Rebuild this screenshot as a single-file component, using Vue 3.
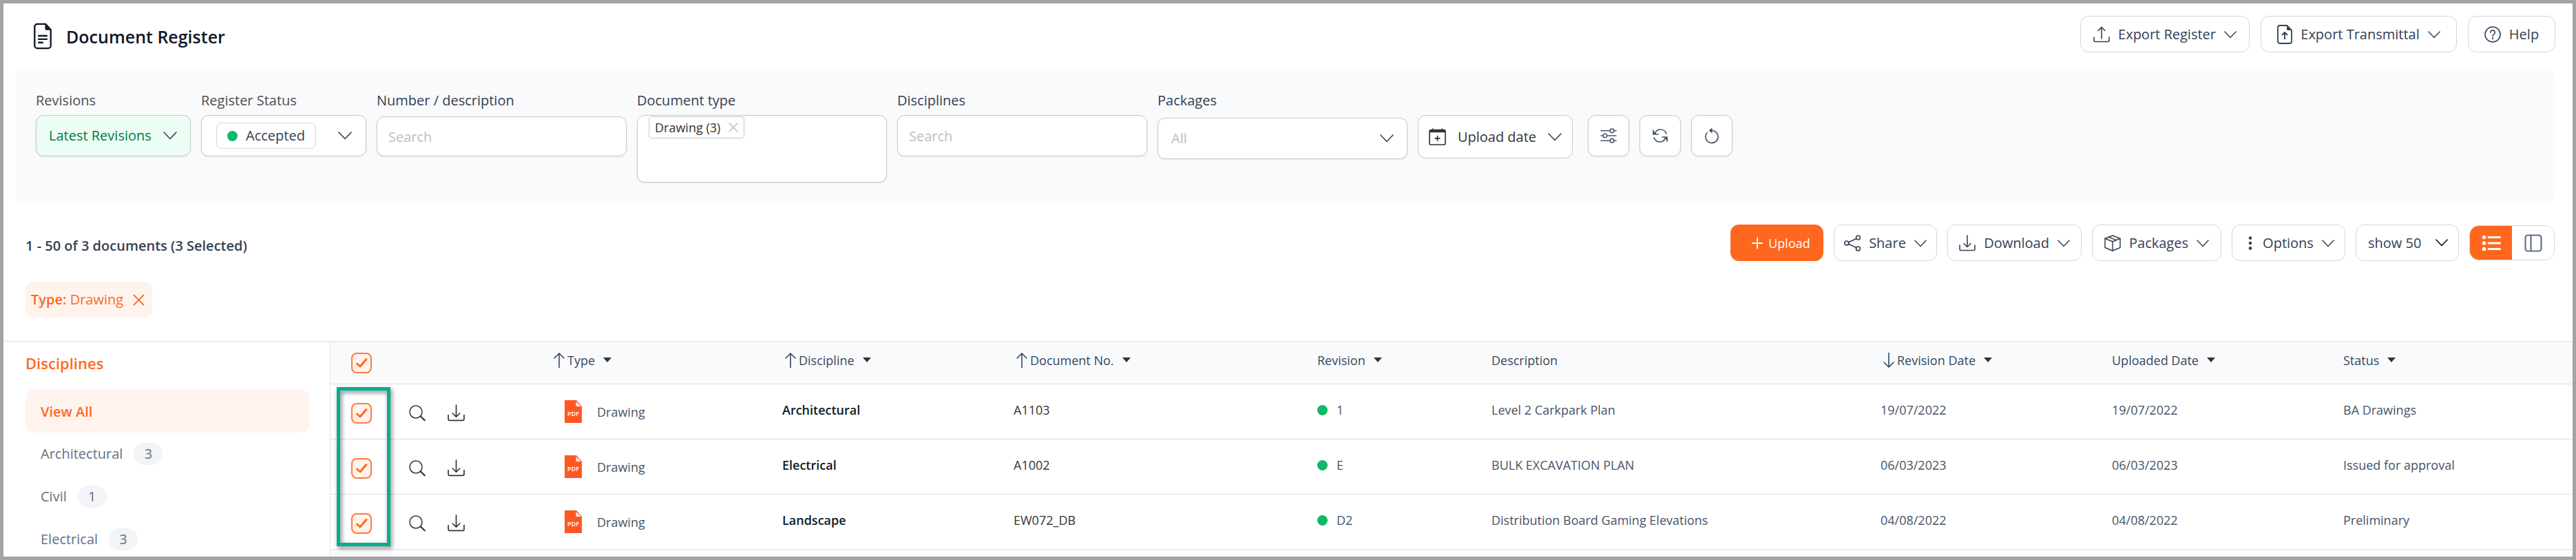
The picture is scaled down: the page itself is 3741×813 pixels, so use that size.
<script setup>
import { h, ref } from 'vue'

const paths = {
  file: { box: '0 0 28 40', w: 2.4, d: ['M6 2h12.500l7.500 8.500V34a4 4 0 0 1-4 4H6A4 4 0 0 1 2 34V6A4 4 0 0 1 6 2z', 'M8 19.500h12M8 24.500h12M8 29.500h6'], f: ['M17.500 2l8.500 9h-6.500a2 2 0 0 1-2-2z'] },
  upload: { box: '0 0 24 24', w: 1.6, d: ['M1 16v4.500a2 2 0 0 0 2 2h18a2 2 0 0 0 2-2V16', 'M12 18V1.500M7 6.500l5-5 5 5'] },
  download: { box: '0 0 24 24', w: 1.6, d: ['M1 15v5.500a2 2 0 0 0 2 2h18a2 2 0 0 0 2-2V15', 'M12 1v16.500M7 12.500l5 5 5-5'] },
  fileUp: { box: '0 0 22 28', w: 1.8, d: ['M4 1h10.500L21 8v16a3 3 0 0 1-3 3H4a3 3 0 0 1-3-3V4a3 3 0 0 1 3-3z', 'M11 20.500v-9M7.500 14.500l3.500-3.500 3.500 3.500'], f: ['M14 1l7 7h-5.500A1.500 1.500 0 0 1 14 6.500z'] },
  help: { box: '0 0 24 24', w: 1.6, d: ['M12 1a11 11 0 1 1 0 22 11 11 0 0 1 0-22z', 'M8.800 9.200a3.200 3.200 0 1 1 5 2.600c-1.200.9-1.800 1.400-1.800 2.900'], f: ['M12 16.500a1.300 1.300 0 1 1 0 2.600 1.300 1.300 0 0 1 0-2.600z'] },
  share: { box: '0 0 24 24', w: 1.7, d: ['M20.500 1a3 3 0 1 1 0 6 3 3 0 0 1 0-6z', 'M20.500 17a3 3 0 1 1 0 6 3 3 0 0 1 0-6z', 'M3.800 9a3 3 0 1 1 0 6 3 3 0 0 1 0-6z', 'M6.500 10.800l11.300-5.400M6.500 13.200l11.300 5.400'] },
  box: { box: '0 0 24 24', w: 1.5, d: ['M12 1l11 4.300v13.200L12 23 1 18.500V5.300z', 'M1 5.300l11 4.500 11-4.500M12 9.800V23M6.500 3.200l11 4.400'] },
  dots: { box: '0 0 6 24', w: 0, f: ['M3 2.300a2.300 2.300 0 1 1 0 4.600 2.300 2.300 0 0 1 0-4.600z', 'M3 9.700a2.300 2.300 0 1 1 0 4.600 2.300 2.300 0 0 1 0-4.600z', 'M3 17.100a2.300 2.300 0 1 1 0 4.600 2.300 2.300 0 0 1 0-4.600z'] },
  plus: { box: '0 0 16 18', w: 1.8, d: ['M8 1.500v15M.5 9h15'] },
  chevron: { box: '0 0 20 12', w: 1.6, d: ['M1 1l9 9.500L19 1'] },
  list: { box: '0 0 28 24', w: 3, d: ['M10 3.500h16.500M10 12h16.500M10 20.500h16.500'], f: ['M3.500.8a2.700 2.700 0 1 1 0 5.400 2.700 2.700 0 0 1 0-5.400z', 'M3.500 9.300a2.700 2.700 0 1 1 0 5.400 2.700 2.700 0 0 1 0-5.400z', 'M3.500 17.800a2.700 2.700 0 1 1 0 5.400 2.700 2.700 0 0 1 0-5.400z'] },
  sidebar: { box: '0 0 26 26', w: 2.2, d: ['M5 1.500h16A3.500 3.500 0 0 1 24.500 5v16a3.500 3.500 0 0 1-3.500 3.500H5A3.500 3.500 0 0 1 1.500 21V5A3.500 3.500 0 0 1 5 1.500z', 'M9.500 1.500v23'] },
  calendar: { box: '0 0 24 24', w: 1.6, d: ['M3 2.500h18a2 2 0 0 1 2 2V21a2 2 0 0 1-2 2H3a2 2 0 0 1-2-2V4.500a2 2 0 0 1 2-2z', 'M12 11v6.400M8.800 14.200h6.400M5.500 1v2M18.500 1v2'], f: ['M1 6V4.500a2 2 0 0 1 2-2h18a2 2 0 0 1 2 2V6z'] },
  sliders: { box: '0 0 24 24', w: 1.6, d: ['M17 2a2.800 2.800 0 1 1 0 5.600A2.800 2.800 0 0 1 17 2z', 'M7 9.200a2.800 2.800 0 1 1 0 5.600 2.800 2.800 0 0 1 0-5.600z', 'M17 16.400a2.800 2.800 0 1 1 0 5.600 2.800 2.800 0 0 1 0-5.600z', 'M1 4.800h13M20 4.800h3M1 12h3M10 12h13M1 19.200h13M20 19.200h3'] },
  refresh: { box: '0 0 24 24', w: 1.7, d: ['M4.500 8C6.300 4.800 9 3 12.300 3c4 0 7.300 2.500 8.700 6', 'M19.500 16c-1.800 3.200-4.500 5-7.800 5-4 0-7.300-2.500-8.700-6', 'M2 4v6h7', 'M22 20v-6h-7'], f: ['M2 5v5h5z', 'M22 19v-5h-5z'] },
  reset: { box: '0 0 24 24', w: 1.7, d: ['M12 4.500A9 9 0 1 1 5 7.800'], f: ['M12.500.5v8L7.500 4.500z'] },
  search: { box: '0 0 24 24', w: 1.5, d: ['M10 1a9 9 0 1 1 0 18 9 9 0 0 1 0-18z', 'M16.500 16.500l6 6', 'M17.200 16.200l6 6'] },
  close: { box: '0 0 18 18', w: 2, d: ['M1.500 1.500l15 15M16.500 1.500l-15 15'] },
  up: { box: '0 0 16 22', w: 1.6, d: ['M8 21.500V1.200M1 8l7-7 7 7'] },
  down: { box: '0 0 16 22', w: 1.6, d: ['M8 .5v20.300M1 14l7 7 7-7'] },
  tick: { box: '0 0 30 30', w: 3, d: ['M8.500 16l4.500 4 9-10.500'] },
}

const Icon = (props) => {
  const p = paths[props.name]
  return h('svg', { viewBox: p.box, fill: 'none', 'aria-hidden': 'true', class: 'icon' }, [
    ...(p.d || []).map((d) => h('path', { d, stroke: 'currentColor', 'stroke-width': p.w, 'stroke-linecap': 'round', 'stroke-linejoin': 'round' })),
    ...(p.f || []).map((d) => h('path', { d, fill: 'currentColor' })),
  ])
}
Icon.props = ['name']

const disciplines = [
  { name: 'Architectural', count: 3 },
  { name: 'Civil', count: 1 },
  { name: 'Electrical', count: 3 },
]

const columns = [
  { label: 'Type', sort: 'up', menu: true },
  { label: 'Discipline', sort: 'up', menu: true },
  { label: 'Document No.', sort: 'up', menu: true },
  { label: 'Revision', menu: true },
  { label: 'Description' },
  { label: 'Revision Date', sort: 'down', menu: true },
  { label: 'Uploaded Date', menu: true },
  { label: 'Status', menu: true },
]

const rows = ref([
  { selected: true, type: 'Drawing', discipline: 'Architectural', number: 'A1103', revision: '1', description: 'Level 2 Carkpark Plan', revised: '19/07/2022', uploaded: '19/07/2022', status: 'BA Drawings' },
  { selected: true, type: 'Drawing', discipline: 'Electrical', number: 'A1002', revision: 'E', description: 'BULK EXCAVATION PLAN', revised: '06/03/2023', uploaded: '06/03/2023', status: 'Issued for approval' },
  { selected: true, type: 'Drawing', discipline: 'Landscape', number: 'EW072_DB', revision: 'D2', description: 'Distribution Board Gaming Elevations', revised: '04/08/2022', uploaded: '04/08/2022', status: 'Preliminary' },
])
const allSelected = ref(true)
</script>

<template>
  <div class="page">
    <header class="header">
      <div class="title">
        <Icon name="file" class="title-icon" />
        <h1>Document Register</h1>
      </div>
      <div class="header-actions">
        <button type="button" class="btn w-register"><Icon name="upload" class="i24" /><span>Export Register</span><Icon name="chevron" class="chev" /></button>
        <button type="button" class="btn w-transmittal"><Icon name="fileUp" class="i-file" /><span>Export Transmittal</span><Icon name="chevron" class="chev" /></button>
        <button type="button" class="btn w-help"><Icon name="help" class="i24" /><span>Help</span></button>
      </div>
    </header>

    <form class="filters" @submit.prevent>
      <div class="field revisions">
        <label for="revisions" class="soft">Revisions</label>
        <div class="select-wrap">
          <select id="revisions" class="control green"><option>Latest Revisions</option></select>
          <Icon name="chevron" class="chev-lg" />
        </div>
      </div>
      <div class="field status">
        <label for="status" class="soft">Register Status</label>
        <button id="status" type="button" class="control status-btn">
          <span class="chip"><span class="dot"></span>Accepted</span>
          <Icon name="chevron" class="chev-lg" />
        </button>
      </div>
      <div class="field wide gap8">
        <label for="number">Number / description</label>
        <input id="number" class="control short" type="text" placeholder="Search" />
      </div>
      <div class="field wide">
        <label for="doctype">Document type</label>
        <div class="control multi">
          <span class="tag">Drawing (3)<button type="button" class="bare" aria-label="Remove Drawing"><Icon name="close" class="i-x" /></button></span>
          <input id="doctype" type="text" />
        </div>
      </div>
      <div class="field wide">
        <label for="disciplines">Disciplines</label>
        <input id="disciplines" class="control" type="text" placeholder="Search" />
      </div>
      <div class="field wide gap10">
        <label for="packages">Packages</label>
        <div class="select-wrap">
          <select id="packages" class="control all"><option>All</option></select>
          <Icon name="chevron" class="chev-lg" />
        </div>
      </div>
      <div class="filter-buttons">
        <button type="button" class="control date"><Icon name="calendar" class="i-cal" /><span>Upload date</span><Icon name="chevron" class="chev-date" /></button>
        <div class="squares">
          <button type="button" class="control square" aria-label="Filter settings"><Icon name="sliders" class="i24" /></button>
          <button type="button" class="control square" aria-label="Refresh"><Icon name="refresh" class="i24" /></button>
          <button type="button" class="control square" aria-label="Reset"><Icon name="reset" class="i24" /></button>
        </div>
      </div>
    </form>

    <section class="toolbar">
      <p class="count">1 - 50 of 3 documents (3 Selected)</p>
      <div class="tools">
        <button type="button" class="btn primary"><Icon name="plus" class="i-plus" /><span>Upload</span></button>
        <button type="button" class="btn w-share"><Icon name="share" class="i24" /><span>Share</span><Icon name="chevron" class="chev" /></button>
        <button type="button" class="btn w-download"><Icon name="download" class="i24" /><span>Download</span><Icon name="chevron" class="chev" /></button>
        <button type="button" class="btn w-packages"><Icon name="box" class="i24" /><span>Packages</span><Icon name="chevron" class="chev" /></button>
        <button type="button" class="btn w-options"><Icon name="dots" class="i-dots" /><span>Options</span><Icon name="chevron" class="chev" /></button>
        <div class="select-wrap show">
          <select class="show-select" aria-label="Rows shown"><option>show 50</option></select>
          <Icon name="chevron" class="chev dark" />
        </div>
        <div class="toggle">
          <button type="button" class="on" aria-label="List view"><Icon name="list" class="i-list" /></button>
          <button type="button" aria-label="Split view"><Icon name="sidebar" class="i-side" /></button>
        </div>
      </div>
    </section>

    <div class="active-filters">
      <span class="filter-tag"><span><b>Type:</b> Drawing</span><button type="button" class="bare" aria-label="Remove type filter"><Icon name="close" class="i-close" /></button></span>
    </div>

    <div class="content">
      <nav class="sidebar" aria-label="Disciplines">
        <h2>Disciplines</h2>
        <ul>
          <li><a href="#" class="current">View All</a></li>
          <li v-for="d in disciplines" :key="d.name"><a href="#">{{ d.name }}<span class="badge">{{ d.count }}</span></a></li>
        </ul>
      </nav>

      <div class="table-wrap">
        <table>
          <colgroup>
            <col class="c-check" /><col class="c-actions" /><col class="c-date" /><col class="c-date" /><col class="c-number" /><col class="c-rev" /><col /><col class="c-date" /><col class="c-date" /><col class="c-status" />
          </colgroup>
          <thead>
            <tr>
              <th class="check-cell">
                <label class="check"><input v-model="allSelected" type="checkbox" aria-label="Select all" /><Icon v-if="allSelected" name="tick" /></label>
              </th>
              <th></th>
              <th v-for="c in columns" :key="c.label">
                <span class="head" :class="{ sorted: c.sort }"><Icon v-if="c.sort" :name="c.sort" class="i-sort" />{{ c.label }}<i v-if="c.menu" class="caret"></i></span>
              </th>
            </tr>
          </thead>
          <tbody>
            <tr v-for="r in rows" :key="r.number">
              <td class="check-cell">
                <label class="check"><input v-model="r.selected" type="checkbox" :aria-label="'Select ' + r.number" /><Icon v-if="r.selected" name="tick" /></label>
              </td>
              <td class="actions-cell">
                <div class="actions">
                  <button type="button" class="bare" aria-label="Preview"><Icon name="search" class="i24" /></button>
                  <button type="button" class="bare" aria-label="Download"><Icon name="download" class="i-dl" /></button>
                </div>
              </td>
              <td class="type-cell">
                <span class="type">
                  <svg class="pdf" viewBox="0 0 25 33" aria-hidden="true">
                    <path d="M0 0h17l8 9v24H0z" fill="#ff5722" />
                    <path d="M16.500 2v7H24z" fill="#fbe9e7" />
                    <text x="12.500" y="23" text-anchor="middle">PDF</text>
                  </svg>
                  {{ r.type }}
                </span>
              </td>
              <td class="strong">{{ r.discipline }}</td>
              <td class="number">{{ r.number }}</td>
              <td><span class="rev"><span class="dot"></span>{{ r.revision }}</span></td>
              <td>{{ r.description }}</td>
              <td>{{ r.revised }}</td>
              <td>{{ r.uploaded }}</td>
              <td>{{ r.status }}</td>
            </tr>
          </tbody>
        </table>
        <div class="highlight"></div>
      </div>
    </div>
  </div>
</template>

<style>
body { margin: 0; }
</style>

<style scoped>
* { box-sizing: border-box; }
.page {
  height: 100vh;
  display: flex;
  flex-direction: column;
  overflow: hidden;
  border: 5px solid #a3a3a3;
  background: #fff;
  color: #344054;
  font-family: "Open Sans", "Noto Sans", sans-serif;
  font-size: 20px;
  line-height: 30px;
}
button, input, select { font: inherit; color: inherit; margin: 0; }
button { cursor: pointer; }
h1, h2, p, ul { margin: 0; padding: 0; }
.icon { display: block; flex: none; }
.bare { border: 0; padding: 0; background: none; display: block; }

.header { display: flex; justify-content: space-between; align-items: flex-start; padding: 18px 25px 24px 43px; }
.title { display: flex; align-items: center; gap: 20px; padding-top: 10px; }
.title-icon { width: 28px; height: 39px; color: #101828; }
h1 { font-size: 25px; line-height: 38px; font-weight: 600; color: #101828; }
.header-actions { display: flex; gap: 16px; }

.btn {
  height: 53px;
  display: flex;
  align-items: center;
  justify-content: center;
  gap: 12px;
  padding: 0 12px;
  border: 1px solid #d0d5dd;
  border-radius: 12px;
  background: #fff;
  color: #344054;
  font-weight: 500;
  white-space: nowrap;
}
.w-register { min-width: 246px; }
.w-transmittal { min-width: 285px; }
.w-help { min-width: 127px; }
.w-share { min-width: 150px; }
.w-download { min-width: 195px; }
.w-packages { min-width: 188px; }
.w-options { min-width: 165px; }
.i24 { width: 24px; height: 24px; }
.i-file { width: 22px; height: 28px; }
.chev { width: 18px; height: 11px; margin-top: 2px; }
.chev-lg { width: 20px; height: 12px; }

.filters {
  display: flex;
  align-items: flex-start;
  gap: 15px;
  min-height: 195px;
  margin: 0 25px 0 17px;
  padding: 31px 30px 30px;
  border-radius: 16px;
  background: #f9fafc;
}
.field { display: flex; flex-direction: column; gap: 6px; }
.field > label { font-weight: 500; white-space: nowrap; }
.field > label.soft { color: #4f4f4f; }
.gap8 { gap: 8px; }
.gap10 { gap: 10px; }
.revisions { width: 225px; }
.status { width: 240px; }
.wide { flex: 0 1 363px; min-width: 0; }
.control {
  width: 100%;
  height: 60px;
  border: 1px solid #c8c9cb;
  border-radius: 11px;
  background: #fff;
  box-shadow: 0 1px 3px rgba(16, 24, 40, 0.08);
  padding: 0 16px;
  outline: none;
}
.short { height: 58px; }
input.control::placeholder { color: #bdbdbd; opacity: 1; }
.select-wrap { display: grid; align-items: center; }
.select-wrap > * { grid-area: 1 / 1; }
.select-wrap > .icon { justify-self: end; margin-right: 20px; pointer-events: none; }
select { appearance: none; }
.green { padding-left: 18px; background: #ecfdf3; color: #027a48; font-weight: 500; }
.all { padding-left: 19px; color: #bdbdbd; }
.status-btn { display: flex; align-items: center; justify-content: space-between; padding: 0 20px 0 21px; }
.chip { display: flex; align-items: center; gap: 12px; height: 38px; padding: 0 15px; border: 1px solid #d0d5dd; border-radius: 8px; font-weight: 500; }
.dot { width: 15px; height: 15px; border-radius: 50%; background: #12b76a; flex: none; }
.multi { height: 98px; padding: 1px 16px; display: flex; flex-direction: column; align-items: flex-start; gap: 8px; }
.multi input { width: 100%; height: 40px; border: 0; padding: 0; outline: none; background: none; }
.tag { display: flex; align-items: center; gap: 12px; height: 32px; padding: 0 8px; border: 1px solid #c8c9cb; border-radius: 4px; font-size: 18px; color: #333; }
.i-x { width: 14px; height: 14px; color: #c4c4c4; }
.filter-buttons { display: flex; gap: 22px; padding-top: 36px; }
.date { width: 225px; height: 63px; display: flex; align-items: center; justify-content: center; gap: 17px; padding: 0 12px; color: #333; white-space: nowrap; box-shadow: none; }
.i-cal { width: 25px; height: 25px; }
.chev-date { width: 20px; height: 12px; color: #344054; }
.squares { display: flex; gap: 15px; }
.square { width: 60px; display: grid; place-items: center; padding: 0; color: #475467; }

.toolbar { display: flex; justify-content: space-between; align-items: center; margin: 31px 26px 0 32px; }
.count { font-weight: 600; padding-top: 8px; }
.tools { display: flex; align-items: center; gap: 15px; }
.primary { min-width: 135px; border-color: #ff671f; background: #ff671f; color: #fff; font-size: 18px; font-weight: 400; gap: 8px; padding: 0 0 0 12px; }
.i-plus { width: 16px; height: 18px; }
.i-dots { width: 6px; height: 24px; margin: 0 3px 0 8px; }
.show { width: 150px; }
.show-select { width: 100%; height: 53px; border: 1px solid #d0d5dd; border-radius: 12px; background: #fff; padding: 0 17px; font-weight: 500; outline: none; }
.select-wrap > .chev { margin: 0 16px 0 0; }
.dark { color: #000; }
.toggle { display: flex; width: 124px; height: 51px; border: 1px solid #d0d5dd; border-radius: 14px; overflow: hidden; }
.toggle button { flex: 1; border: 0; padding: 0; background: #fff; color: #667085; display: grid; place-items: center; }
.toggle .on { background: #ff671f; color: #fff; }
.i-list { width: 28px; height: 24px; }
.i-side { width: 26px; height: 26px; }

.active-filters { padding: 30px 32px 34px; display: flex; }
.filter-tag { display: flex; align-items: center; gap: 14px; height: 52px; padding: 0 11px 0 8px; border-radius: 10px; background: #fff4ed; color: #ff671f; }
.filter-tag b { font-weight: 600; }
.i-close { width: 17px; height: 17px; }

.content { flex: 1; min-height: 0; display: flex; overflow: hidden; border-top: 1px solid #dcdee2; }
.sidebar { width: 474px; flex: none; padding: 16px 30px 0 32px; }
h2 { font-size: 22px; line-height: 30px; font-weight: 600; color: #ff671f; padding-bottom: 24px; }
ul { list-style: none; }
.sidebar a { display: flex; align-items: center; gap: 16px; height: 62px; padding: 0 22px; border-radius: 10px; color: #667085; font-weight: 500; text-decoration: none; }
.sidebar .current { background: #fff4ed; color: #ff671f; padding-top: 2px; font-weight: 600; }
.badge { height: 32px; min-width: 42px; padding: 0 15px; border-radius: 16px; background: #f2f4f7; line-height: 32px; text-align: center; }

.table-wrap { position: relative; flex: 1; min-width: 0; border-left: 1px solid #e4e6ea; background: #f9fafc; }
table { width: 100%; table-layout: fixed; border-collapse: separate; border-spacing: 0; font-size: 18px; line-height: 26px; }
.c-check { width: 101px; }
.c-actions { width: 219px; }
.c-date { width: 336px; }
.c-status { width: 333px; }
.c-number { width: 441px; }
.c-rev { width: 253px; }
th, td { text-align: left; padding: 0; border-bottom: 1px solid #dcdee2; white-space: nowrap; }
th { height: 62px; font-weight: 500; color: #34495e; background: #f9fafc; padding-bottom: 8px; }
td { height: 80px; background: #fff; color: #475467; padding-bottom: 5px; }
.head { display: flex; align-items: center; }
.sorted { padding-left: 4px; }
.i-sort { width: 16px; height: 22px; margin-right: 4px; }
.caret { margin-left: 12px; border: 6px solid transparent; border-top: 7px solid #333; border-bottom: 0; }
td.check-cell, td.actions-cell { padding: 4px 0 0; }
th.check-cell { padding: 0; }
.check-cell { vertical-align: middle; }
.check { display: grid; width: 30px; height: 30px; margin-left: 30px; }
.check > * { grid-area: 1 / 1; }
.check input { appearance: none; width: 30px; height: 30px; border: 2px solid #ff7a3c; border-radius: 8px; background: #fff4ed; }
.check .icon { width: 30px; height: 30px; color: #ff671f; pointer-events: none; z-index: 1; }
.actions { display: flex; align-items: center; gap: 31px; padding-left: 13px; color: #333; }
.i-dl { width: 27px; height: 25px; }
td.type-cell { padding: 0 0 0 20px; }
.type { display: flex; align-items: center; gap: 22px; }
.pdf { width: 25px; height: 33px; }
.pdf text { font: 600 9px "Open Sans", sans-serif; fill: #fff; }
.strong { font-weight: 600; color: #101828; }
td.number { color: #333; }
.rev { display: flex; align-items: center; gap: 13px; }
.highlight { position: absolute; left: 9px; top: 66px; width: 78px; height: 231px; border: 5px solid #06ae8f; filter: drop-shadow(2px 3px 3px rgba(0, 0, 0, 0.5)); pointer-events: none; }
</style>
